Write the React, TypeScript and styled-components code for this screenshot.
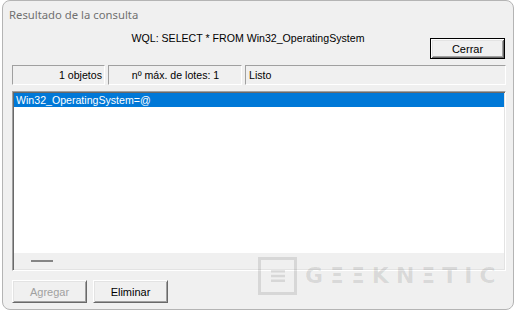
import React from "react";
import styled, { createGlobalStyle } from "styled-components";

const Global = createGlobalStyle`
  html, body { margin: 0; padding: 0; background: #ffffff; }
  body { font-family: "Liberation Sans", Arial, sans-serif; }
  * { box-sizing: border-box; }
`;

const Window = styled.div`
  position: relative;
  margin-left: 2px;
  width: 512px;
  height: 310px;
  background: #f0f0f0;
  border: 1px solid #b4b4b4;
  border-radius: 8px;
  overflow: hidden;
  display: flex;
  flex-direction: column;
`;

const TitleBar = styled.div`
  height: 30px;
  padding: 6px 0 0 6px;
  font-family: "Noto Sans", "Open Sans", sans-serif;
  font-size: 11.3px;
  line-height: 16px;
  color: #707070;
`;

const Header = styled.div`
  display: flex;
  align-items: flex-start;
  height: 28px;
  padding: 0 8px 0 9px;
`;

const Query = styled.div`
  flex: 1;
  margin-top: 1px;
  padding-left: 54px;
  text-align: center;
  font-size: 10.6px;
  line-height: 13px;
  color: #000;
`;

const Button = styled.button<{ $default?: boolean }>`
  width: 75px;
  height: ${(p) => (p.$default ? 21 : 23)}px;
  margin-top: ${(p) => (p.$default ? 7 : 0)}px;
  padding: 0;
  background: #f0f0f0;
  font-family: "Liberation Sans", Arial, sans-serif;
  font-size: 11px;
  color: ${(p) => (p.disabled ? "#a0a0a0" : "#000")};
  border-style: solid;
  border-width: 1px;
  border-color: ${(p) =>
    p.$default ? "#000" : "#ffffff #696969 #696969 #ffffff"};
  box-shadow: ${(p) =>
    p.$default
      ? "inset 1px 1px #ffffff, inset -1px -1px #696969, inset 2px 2px #e3e3e3, inset -2px -2px #a0a0a0"
      : "inset 1px 1px #e3e3e3, inset -1px -1px #a0a0a0"};
  cursor: default;
`;

const StatusRow = styled.div`
  display: flex;
  gap: 3px;
  height: 20px;
  margin: 6px 7px 0 9px;
`;

const Cell = styled.div<{ $w?: number; $align: string }>`
  ${(p) => (p.$w ? `width: ${p.$w}px;` : "flex: 1;")}
  display: flex;
  align-items: center;
  justify-content: ${(p) => p.$align};
  padding: 0 2px 0 3px;
  font-size: 10.6px;
  color: #000;
  border-style: solid;
  border-width: 1px;
  border-color: #a0a0a0 #ffffff #ffffff #a0a0a0;
`;

const ListBox = styled.div`
  display: flex;
  flex-direction: column;
  height: 180px;
  margin: 6px 7px 0 9px;
  background: #ffffff;
  border-style: solid;
  border-width: 1px;
  border-color: #a0a0a0 #ffffff #ffffff #a0a0a0;
  box-shadow: inset 1px 1px #696969, inset -1px -1px #e3e3e3;
  padding: 1px;
`;

const Items = styled.div`
  flex: 1;
`;

const Item = styled.div<{ $selected?: boolean }>`
  height: 14px;
  padding-left: 2px;
  font-size: 10.6px;
  line-height: 14px;
  color: ${(p) => (p.$selected ? "#fff" : "#000")};
  background: ${(p) => (p.$selected ? "#0078d7" : "transparent")};
  white-space: nowrap;
`;

const HScroll = styled.div`
  height: 16px;
  background: #f0f0f0;
  display: flex;
  align-items: center;
  padding-left: 17px;
`;

const Thumb = styled.div`
  width: 22px;
  height: 2px;
  background: #858585;
`;

const Footer = styled.div`
  display: flex;
  gap: 6px;
  margin: 9px 0 0 9px;
`;

const Watermark = styled.div`
  position: absolute;
  left: 255px;
  top: 256px;
  display: flex;
  align-items: center;
  gap: 8px;
  pointer-events: none;
  color: rgba(0, 0, 0, 0.1);
`;

const LogoBox = styled.div`
  width: 39px;
  height: 38px;
  border: 3px solid rgba(0, 0, 0, 0.1);
  display: flex;
  align-items: center;
  justify-content: center;
`;

const LogoText = styled.div`
  font-family: "DejaVu Sans", sans-serif;
  font-weight: bold;
  font-size: 22px;
  letter-spacing: 7px;
  line-height: 22px;
`;

export default function App() {
  return (
    <>
      <Global />
      <Window>
        <TitleBar>Resultado de la consulta</TitleBar>
        <Header>
          <Query>WQL: SELECT * FROM Win32_OperatingSystem</Query>
          <Button $default>Cerrar</Button>
        </Header>
        <StatusRow>
          <Cell $w={93} $align="flex-end">1 objetos</Cell>
          <Cell $w={134} $align="center">nº máx. de lotes: 1</Cell>
          <Cell $align="flex-start">Listo</Cell>
        </StatusRow>
        <ListBox>
          <Items>
            <Item $selected>Win32_OperatingSystem=@</Item>
          </Items>
          <HScroll>
            <Thumb />
          </HScroll>
        </ListBox>
        <Footer>
          <Button disabled>Agregar</Button>
          <Button>Eliminar</Button>
        </Footer>
        <Watermark>
          <LogoBox>
            <svg width="14" height="14" viewBox="0 0 14 14">
              <rect x="0" y="1" width="14" height="2.5" fill="rgba(0,0,0,0.1)" />
              <rect x="0" y="5.8" width="14" height="2.5" fill="rgba(0,0,0,0.1)" />
              <rect x="0" y="10.5" width="14" height="2.5" fill="rgba(0,0,0,0.1)" />
            </svg>
          </LogoBox>
          <LogoText>GΞΞKNΞTIC</LogoText>
        </Watermark>
      </Window>
    </>
  );
}
